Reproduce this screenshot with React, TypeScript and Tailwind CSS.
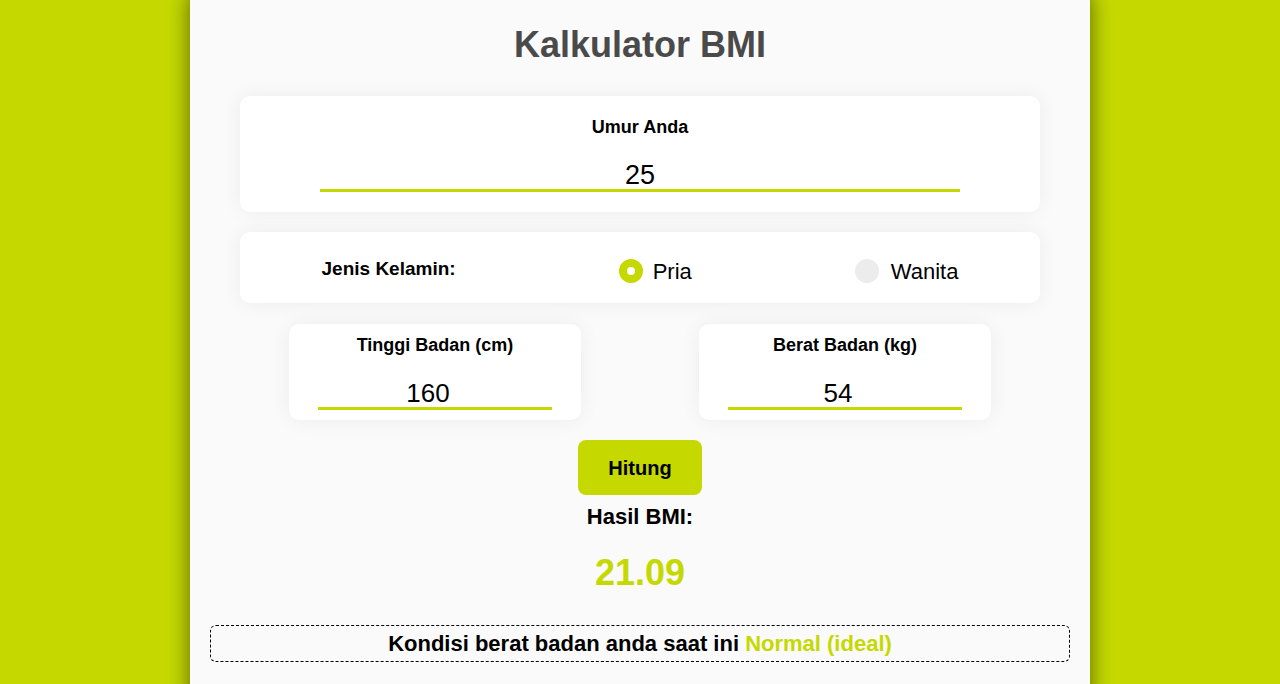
import React from "react";

const font = { fontFamily: '"Liberation Sans", Arial, Helvetica, sans-serif' };

export default function App() {
  return (
    <div className="w-[1280px] h-[684px] overflow-hidden bg-[#c5d900] flex justify-center" style={font}>
      <div className="w-[900px] mt-[-10px] h-[720px] bg-[#fafafa] rounded-[12px] shadow-[0_0_22px_rgba(0,0,0,0.55)] flex flex-col items-center">
        <h1 className="mt-[33px] text-[36px] leading-[44px] font-bold text-[#4a4a4a]">Kalkulator BMI</h1>

        <div className="mt-[29px] w-[800px] h-[116px] bg-white rounded-[10px] shadow-[0_0_20px_rgba(0,0,0,0.06)] flex flex-col items-center">
          <div className="mt-[20px] text-[18px] leading-[22px] font-bold text-black">Umur Anda</div>
          <div className="mt-[23px] w-[640px] border-b-[3px] border-[#c5d900] text-center text-[27px] leading-[28px] text-black">25</div>
        </div>

        <div className="mt-[20px] w-[800px] h-[71px] bg-white rounded-[10px] shadow-[0_0_20px_rgba(0,0,0,0.06)] flex items-center justify-around">
          <div className="text-[19px] font-bold text-black pt-[3px]">Jenis Kelamin:</div>
          <div className="flex items-center gap-[10px] pt-[7px]">
            <div className="w-[24px] h-[24px] rounded-full bg-[#c5d900] flex items-center justify-center">
              <div className="w-[8px] h-[8px] rounded-full bg-white" />
            </div>
            <span className="text-[22px] text-black">Pria</span>
          </div>
          <div className="flex items-center gap-[12px] pt-[7px]">
            <div className="w-[24px] h-[24px] rounded-full bg-[#ececec]" />
            <span className="text-[22px] text-black">Wanita</span>
          </div>
        </div>

        <div className="mt-[21px] flex justify-center gap-[118px]">
          {[
            ["Tinggi Badan (cm)", "160"],
            ["Berat Badan (kg)", "54"],
          ].map(([label, val]) => (
            <div key={label} className="w-[292px] h-[96px] bg-white rounded-[10px] shadow-[0_0_20px_rgba(0,0,0,0.06)] flex flex-col items-center">
              <div className="mt-[10px] text-[18px] leading-[22px] font-bold text-black">{label}</div>
              <div className="mt-[23px] w-[234px] pr-[14px] border-b-[3px] border-[#c5d900] text-center text-[26px] leading-[28px] text-black">{val}</div>
            </div>
          ))}
        </div>

        <button className="mt-[20px] w-[124px] h-[55px] bg-[#c5d900] rounded-[8px] text-[20px] font-bold text-black">Hitung</button>

        <div className="mt-[9px] text-[22px] leading-[26px] font-bold text-black">Hasil BMI:</div>
        <div className="mt-[21px] text-[36px] leading-[44px] font-bold text-[#c5d900]">21.09</div>

        <div className="mt-[30px] w-[860px] h-[37px] border border-dashed border-black rounded-[6px] flex items-center justify-center text-[22px] font-bold text-black">
          <span>Kondisi berat badan anda saat ini&nbsp;</span>
          <span className="text-[#c5d900]">Normal (ideal)</span>
        </div>
      </div>
    </div>
  );
}
